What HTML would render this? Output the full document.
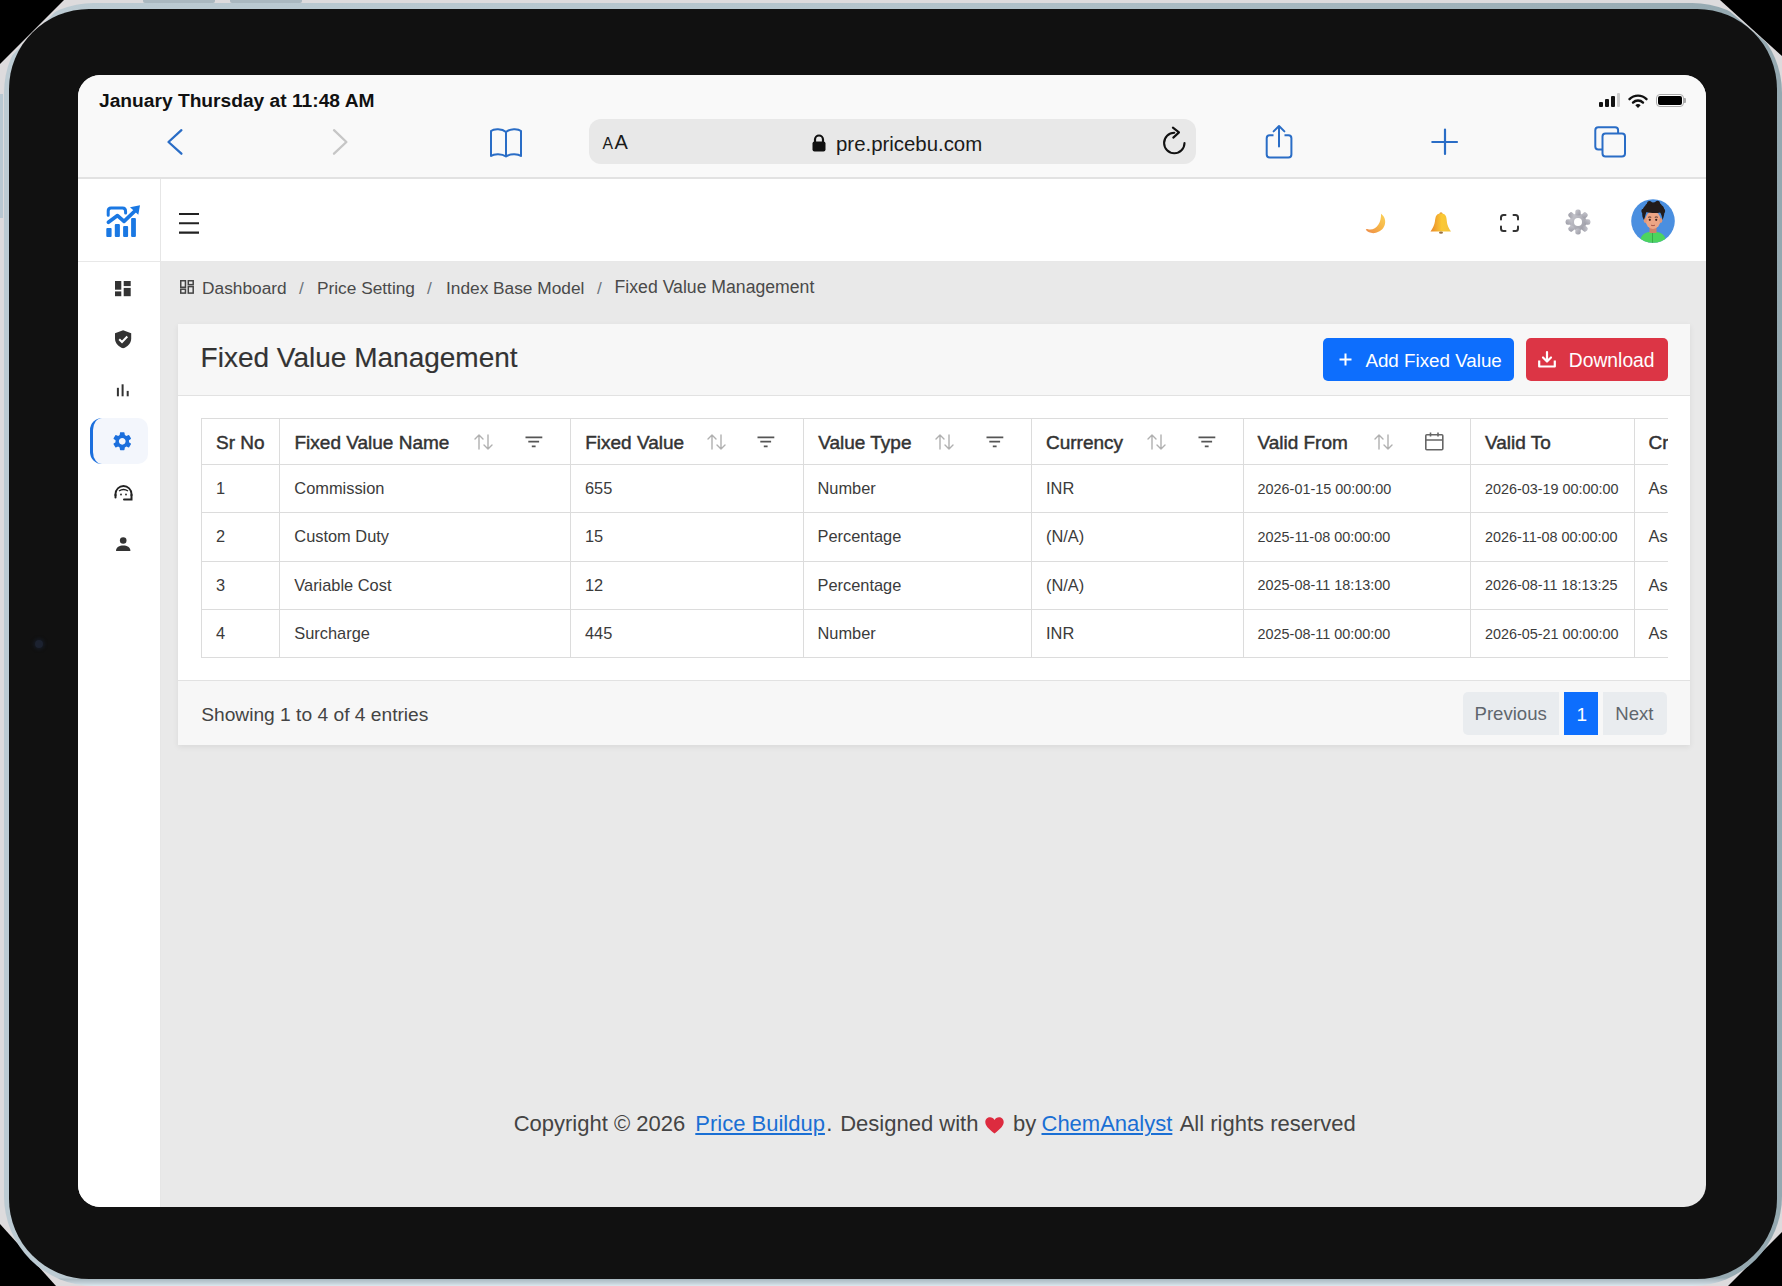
<!DOCTYPE html>
<html><head><meta charset="utf-8">
<style>
*{box-sizing:border-box;margin:0;padding:0}
html,body{width:1782px;height:1286px;overflow:hidden;background:#000;font-family:"Liberation Sans",sans-serif}
.a{position:absolute}
.t{position:absolute;line-height:1;white-space:nowrap}
#outer{position:absolute;left:0;top:0;width:1782px;height:1286px;background:#dddbdd;clip-path:polygon(64px 0,1720px 0,1782px 56px,1782px 1232px,1728px 1286px,56px 1286px,0 1224px,0 64px)}
#ring{position:absolute;left:3.5px;top:3px;width:1778.5px;height:1283px;background:linear-gradient(0deg,#dbe8ee 0,#c3d0d8 3px,#a8b8c0 7px,rgba(168,184,192,0) 8px),linear-gradient(90deg,#bccbd3,#b4c4cc 50%,#94a8b0);border-radius:90px;clip-path:polygon(60.5px 0,1716.5px 0,1778.5px 53px,1778.5px 1283px,0 1283px,0 61px)}
#bezel{position:absolute;left:9px;top:8.5px;width:1768px;height:1270.5px;background:#111;border-radius:80px}
#screen{position:absolute;left:78px;top:75px;width:1628px;height:1132px;background:#e9e9e9;border-radius:22px;overflow:hidden}
#safari{position:absolute;left:0;top:0;width:1628px;height:104px;background:#f9f9f9;border-bottom:2px solid #e2e2e2}
#apphdr{position:absolute;left:0;top:104px;width:1628px;height:83px;background:#fff;border-bottom:1px solid #e8e8e8}
#sidebar{position:absolute;left:0;top:104px;width:83px;height:1028px;background:#fff;border-right:1px solid #e6e6e6}
svg{position:absolute;overflow:visible}
</style></head><body>
<div id="outer"></div>
<div id="ring"></div>
<div id="bezel"></div>
<div class="a" style="left:143px;top:0;width:72px;height:3px;background:#aab8c0;border-radius:0 0 2px 2px"></div>
<div class="a" style="left:230px;top:0;width:72px;height:3px;background:#aab8c0;border-radius:0 0 2px 2px"></div>
<div class="a" style="left:0;top:94px;width:3px;height:124px;background:#b8c8d2"></div>
<div class="a" style="left:35px;top:640px;width:8px;height:8px;border-radius:50%;background:#1c2230;box-shadow:0 0 3px 2px #141820"></div>
<div id="screen">
  <!-- SAFARI -->
  <div id="safari">
    <div class="t" style="left:21px;top:15.6px;font-size:19.2px;font-weight:bold;color:#111">January Thursday at 11:48 AM</div>
    <!-- status icons -->
    <div class="a" style="left:1521px;top:27px;width:4px;height:5px;background:#111;border-radius:1px"></div>
    <div class="a" style="left:1527px;top:24px;width:4px;height:8px;background:#111;border-radius:1px"></div>
    <div class="a" style="left:1533px;top:21px;width:4px;height:11px;background:#111;border-radius:1px"></div>
    <div class="a" style="left:1539px;top:18px;width:3px;height:14px;background:#ccc;border-radius:1px"></div>
    <svg style="left:1550px;top:19px" width="20" height="14" viewBox="0 0 20 14"><path d="M1.5 5.2 A12 12 0 0 1 18.5 5.2" fill="none" stroke="#111" stroke-width="2.4" stroke-linecap="round"/><path d="M5 8.6 A7 7 0 0 1 15 8.6" fill="none" stroke="#111" stroke-width="2.4" stroke-linecap="round"/><path d="M7.3 11.3 L10 14 L12.7 11.3 A3.8 3.8 0 0 0 7.3 11.3Z" fill="#111"/></svg>
    <div class="a" style="left:1578px;top:19px;width:28px;height:13px;border:1.5px solid #aaa;border-radius:4px;background:#fff"></div>
    <div class="a" style="left:1580px;top:21px;width:24px;height:9px;background:#000;border-radius:2px"></div>
    <div class="a" style="left:1606px;top:23px;width:2px;height:5px;background:#aaa;border-radius:0 1px 1px 0"></div>
    <!-- back / forward -->
    <svg style="left:88px;top:53px" width="18" height="28" viewBox="0 0 18 28"><path d="M15.4 2.2 L2.5 14 L15.4 25.7" fill="none" stroke="#2a6dc6" stroke-width="2.3" stroke-linecap="round" stroke-linejoin="round"/></svg>
    <svg style="left:254px;top:53px" width="18" height="28" viewBox="0 0 18 28"><path d="M2 2.2 L14.4 14 L2 25.7" fill="none" stroke="#c6c6c6" stroke-width="2.3" stroke-linecap="round" stroke-linejoin="round"/></svg>
    <!-- book -->
    <svg style="left:410px;top:52px" width="36" height="32" viewBox="0 0 36 32"><path d="M18 5 C14 1.5 6 1.5 3 4 L3 29 C6 26.5 14 26.5 18 29.5 C22 26.5 30 26.5 33 29 L33 4 C30 1.5 22 1.5 18 5 Z M18 5 L18 29.5" fill="none" stroke="#2a6dc6" stroke-width="2" stroke-linejoin="round"/></svg>
    <!-- url field -->
    <div class="a" style="left:511px;top:44px;width:607px;height:45px;background:#e8e8e8;border-radius:12px"></div>
    <div class="t" style="left:524.6px;top:60.6px;font-size:15.8px;color:#1a1a1a">A</div>
    <div class="t" style="left:536.6px;top:57.2px;font-size:20px;color:#1a1a1a">A</div>
    <svg style="left:733px;top:59px" width="16" height="19" viewBox="0 0 16 19"><path d="M4 8 L4 5.5 A4 4 0 0 1 12 5.5 L12 8" fill="none" stroke="#111" stroke-width="2.2"/><rect x="1.5" y="7.5" width="13" height="10" rx="2" fill="#111"/></svg>
    <div class="t" style="left:758px;top:58.5px;font-size:20.4px;color:#1a1a1a">pre.pricebu.com</div>
    <svg style="left:1082px;top:49px" width="30" height="32" viewBox="0 0 30 32"><path d="M14.3 8.8 A10.2 10.2 0 1 0 24.5 19" fill="none" stroke="#111" stroke-width="2.1" stroke-linecap="round"/><path d="M12.9 3.6 L19 8.4 L13.3 13.6" fill="none" stroke="#111" stroke-width="2.1" stroke-linecap="round" stroke-linejoin="round"/></svg>
    <!-- share -->
    <svg style="left:1186px;top:49px" width="30" height="36" viewBox="0 0 30 36"><path d="M9.5 11.2 H5.7 Q2.7 11.2 2.7 14.2 V30.6 Q2.7 33.6 5.7 33.6 H24.4 Q27.4 33.6 27.4 30.6 V14.2 Q27.4 11.2 24.4 11.2 H20.5" fill="none" stroke="#2a6dc6" stroke-width="2"/><path d="M15 22.4 V2 M9.6 7.4 L15 2 L20.4 7.4" fill="none" stroke="#2a6dc6" stroke-width="2" stroke-linecap="round" stroke-linejoin="round"/></svg>
    <!-- plus -->
    <svg style="left:1352px;top:53px" width="29" height="28" viewBox="0 0 29 28"><path d="M15 1.6 V25.9 M2.3 14 H27" fill="none" stroke="#2a6dc6" stroke-width="2.2" stroke-linecap="round"/></svg>
    <!-- tabs -->
    <svg style="left:1515px;top:50px" width="34" height="34" viewBox="0 0 34 34"><path d="M9.5 24.6 H5.3 Q2.3 24.6 2.3 21.6 V5.3 Q2.3 2.3 5.3 2.3 H22.1 Q25.1 2.3 25.1 5.3 V8.5" fill="none" stroke="#2a6dc6" stroke-width="2"/><rect x="9.5" y="8.5" width="22.5" height="22.9" rx="3" fill="none" stroke="#2a6dc6" stroke-width="2"/></svg>
  </div>

  <!-- APP HEADER -->
  <div id="apphdr">
    <svg style="left:101px;top:33.6px" width="21" height="21" viewBox="0 0 21 21"><path d="M0 1 H20 M0 10.3 H20 M0 19.6 H20" stroke="#222" stroke-width="2.1" fill="none"/></svg>
    <!-- moon -->
    <svg style="left:1287px;top:34px" width="24" height="22" viewBox="0 0 24 22"><defs><linearGradient id="mg" x1="0" y1="1" x2="1" y2="0"><stop offset="0" stop-color="#ee8a4a"/><stop offset="0.5" stop-color="#f6b347"/><stop offset="1" stop-color="#fbd35a"/></linearGradient></defs><path d="M16 0.8 C22.5 5 22 17 11 19.8 C7 20.8 3 19.5 0.8 16.8 C1 16 1.8 15.8 3 16.3 C11 18 16.5 10 16 0.8 Z" fill="url(#mg)"/></svg>
    <!-- bell -->
    <svg style="left:1352px;top:32.5px" width="22" height="23" viewBox="0 0 22 23"><defs><linearGradient id="bg" x1="0" y1="0" x2="1" y2="0"><stop offset="0" stop-color="#e8862a"/><stop offset="0.55" stop-color="#fbc934"/><stop offset="1" stop-color="#f3c13e"/></linearGradient></defs><circle cx="11" cy="1.8" r="1.6" fill="#e39a3a"/><path d="M11 1.5 C6 1.5 5.5 5 5 9 C4.5 13 2.5 16.5 0.5 19.5 L21 19.5 C19 16.5 17 13 16.8 9 C16.5 5 16 1.5 11 1.5 Z" fill="url(#bg)"/><ellipse cx="11" cy="20.6" rx="2" ry="1.2" fill="#9a7040"/></svg>
    <!-- fullscreen -->
    <svg style="left:1422px;top:35px" width="19" height="18" viewBox="0 0 19 18"><path d="M1 5.5 V3.5 Q1 1 3.5 1 H5.5 M13.5 1 H15.5 Q18 1 18 3.5 V5.5 M18 12.5 V14.5 Q18 17 15.5 17 H13.5 M5.5 17 H3.5 Q1 17 1 14.5 V12.5" fill="none" stroke="#333" stroke-width="2" stroke-linecap="round"/></svg>
    <!-- gear -->
    <svg style="left:1487px;top:30px" width="26" height="26" viewBox="0 0 26 26"><defs><linearGradient id="gg" x1="0" y1="0" x2="1" y2="1"><stop offset="0" stop-color="#c9c9d0"/><stop offset="1" stop-color="#9a9aa4"/></linearGradient></defs><g fill="url(#gg)"><circle cx="13" cy="13" r="8.5"/><g id="th"><rect x="10.3" y="0.6" width="5.4" height="6" rx="2.2"/><rect x="10.3" y="19.4" width="5.4" height="6" rx="2.2"/></g><use href="#th" transform="rotate(45 13 13)"/><use href="#th" transform="rotate(90 13 13)"/><use href="#th" transform="rotate(135 13 13)"/></g><circle cx="13" cy="13" r="4" fill="#fff"/></svg>
    <!-- avatar -->
    <svg style="left:1553.4px;top:20.3px" width="44" height="44" viewBox="0 0 44 44"><defs><clipPath id="ac"><circle cx="22" cy="22" r="21.8"/></clipPath></defs><circle cx="22" cy="22" r="21.8" fill="#4a8fe0"/><g clip-path="url(#ac)"><path d="M9 44 C9 36 14 32.5 22 32.5 C30 32.5 35 36 35 44 Z" fill="#4cd45e"/><path d="M21.5 33 V44" stroke="#3aa84a" stroke-width="1"/><rect x="18.5" y="26" width="7" height="8" fill="#d0826a"/><ellipse cx="22" cy="21" rx="7.6" ry="9" fill="#eca585"/><ellipse cx="14.3" cy="21.5" rx="1.6" ry="2.4" fill="#e09878"/><ellipse cx="29.7" cy="21.5" rx="1.6" ry="2.4" fill="#e09878"/><path d="M13 21 C10 17 11 9 14 7 C15 4 19 2.5 22 3.5 C25 2 29.5 3.5 31 6.5 C34 8 34.5 14 31.5 21 C31 17 30 14.5 29 13.5 C26 14.5 18 14 15.5 13 C14.5 15 14 18 13 21 Z" fill="#221c1c"/><circle cx="12.5" cy="12" r="2.2" fill="#221c1c"/><circle cx="32" cy="12" r="2.2" fill="#221c1c"/><circle cx="18.5" cy="4.5" r="2.5" fill="#221c1c"/><circle cx="26.5" cy="4.2" r="2.5" fill="#221c1c"/><path d="M17.2 18.3 Q18.7 17.6 20.2 18.3 M23.8 18.3 Q25.3 17.6 26.8 18.3" stroke="#3a2420" stroke-width="0.9" fill="none"/><circle cx="18.8" cy="20.8" r="1.1" fill="#3a2420"/><circle cx="25.2" cy="20.8" r="1.1" fill="#3a2420"/><path d="M20 26.2 Q22 27.2 24 26.2" stroke="#a8584a" stroke-width="1" fill="none"/></g></svg>
  </div>
  <!-- SIDEBAR -->
  <div id="sidebar">
    <svg style="left:27px;top:23.8px" width="37" height="35" viewBox="0 0 37 35"><g fill="#1a78e3"><rect x="1.3" y="25" width="5.3" height="9" rx="1"/><rect x="9.8" y="21" width="5.1" height="13" rx="1"/><rect x="18.1" y="23" width="5" height="11" rx="1"/><rect x="26.1" y="15" width="4.8" height="19" rx="1"/><path d="M25 4.3 L35 2.2 L33.3 11.8 Z"/></g><path d="M3.4 19.2 L12.5 12.6 L19 18.4 L32 6" fill="none" stroke="#1a78e3" stroke-width="3.7" stroke-linecap="round" stroke-linejoin="round"/><path d="M3.2 12.2 V8 Q3.2 5 6 5 H17.5 Q20.6 5 20.6 8.5 V10" fill="none" stroke="#1a78e3" stroke-width="3" stroke-linecap="round"/></svg>
    <div class="a" style="left:0;top:82px;width:82px;height:1px;background:#e8e8e8"></div>
    <!-- dashboard icon -->
    <svg style="left:36.8px;top:101.6px" width="16" height="16" viewBox="0 0 16 16"><g fill="#333"><rect x="0" y="0" width="6.3" height="8.7"/><rect x="0" y="10.4" width="6.3" height="4.8"/><rect x="8.7" y="0" width="7" height="5.1"/><rect x="8.7" y="6.9" width="7" height="8.3"/></g></svg>
    <!-- shield -->
    <svg style="left:36.8px;top:151.2px" width="17" height="19" viewBox="0 0 17 19"><path d="M8.1 0.2 L16.2 3.2 V8.5 C16.2 13 12.8 16.8 8.1 18.3 C3.4 16.8 0 13 0 8.5 V3.2 Z" fill="#333"/><path d="M4.2 9.2 L7 12 L12.3 6.5" fill="none" stroke="#fff" stroke-width="2"/></svg>
    <!-- chart -->
    <svg style="left:38px;top:205px" width="14" height="14" viewBox="0 0 14 14"><g fill="#333"><rect x="0.9" y="3.8" width="2" height="8.5"/><rect x="5.6" y="0.3" width="2" height="12"/><rect x="10.7" y="6.9" width="2" height="5.4"/></g></svg>
    <!-- active -->
    <div class="a" style="left:11.7px;top:239.2px;width:58.3px;height:46px;background:#f3f6fc;border-radius:12px 10px 10px 12px;border-left:3.4px solid #1b6fdd"></div>
    <svg style="left:33.1px;top:250.7px" width="22.5" height="22.5" viewBox="0 0 24 24"><path fill="#1b6fdd" d="M19.14 12.94c.04-.3.06-.61.06-.94 0-.32-.02-.64-.07-.94l2.03-1.58a.49.49 0 0 0 .12-.61l-1.92-3.32a.49.49 0 0 0-.59-.22l-2.39.96c-.5-.38-1.03-.7-1.62-.94l-.36-2.54a.48.48 0 0 0-.48-.41h-3.84c-.24 0-.43.17-.47.41l-.36 2.54c-.59.24-1.13.57-1.62.94l-2.39-.96a.48.48 0 0 0-.59.22L2.74 8.87c-.12.21-.08.47.12.61l2.03 1.58c-.05.3-.09.63-.09.94s.02.64.07.94l-2.03 1.58a.49.49 0 0 0-.12.61l1.92 3.32c.12.22.37.29.59.22l2.39-.96c.5.38 1.03.7 1.62.94l.36 2.54c.05.24.24.41.48.41h3.84c.24 0 .44-.17.47-.41l.36-2.54c.59-.24 1.13-.56 1.62-.94l2.39.96c.22.08.47 0 .59-.22l1.92-3.32c.12-.22.07-.47-.12-.61l-2.01-1.58zM12 15.6c-1.98 0-3.6-1.62-3.6-3.6s1.62-3.6 3.6-3.6 3.6 1.62 3.6 3.6-1.62 3.6-3.6 3.6z"/></svg>
    <!-- headset -->
    <svg style="left:35.6px;top:305.7px" width="19" height="16" viewBox="0 0 19 16"><path d="M1.5 11 V9 A8 8 0 0 1 17.5 9 V11" fill="none" stroke="#222" stroke-width="1.8"/><path d="M5 6 Q9.5 3 14 6" fill="none" stroke="#222" stroke-width="1.5"/><circle cx="7" cy="9.5" r="0.9" fill="#222"/><circle cx="12" cy="9.5" r="0.9" fill="#222"/><path d="M1.5 9.5 V12.5 M17.5 9.5 V14.5 H10" fill="none" stroke="#222" stroke-width="2" stroke-linecap="round"/></svg>
    <!-- person -->
    <svg style="left:37.6px;top:357.6px" width="15" height="15" viewBox="0 0 15 15"><circle cx="7.2" cy="3.5" r="3.3" fill="#333"/><path d="M0 14 C0 10 3.5 8.5 7.2 8.5 C11 8.5 14.4 10 14.4 14 Z" fill="#333"/></svg>
  </div>
  <!-- BREADCRUMB -->
  <svg style="left:101.7px;top:205.0px" width="14" height="14" viewBox="0 0 14 14"><g fill="none" stroke="#444" stroke-width="1.5"><rect x="0.75" y="0.75" width="4.7" height="6.5"/><rect x="0.75" y="9.2" width="4.7" height="3.9"/><rect x="8.3" y="0.75" width="4.9" height="3.9"/><rect x="8.3" y="6.6" width="4.9" height="6.5"/></g></svg>
  <div class="t" style="left:124.1px;top:204.6px;font-size:17.3px;color:#4a4a4a">Dashboard</div>
  <div class="t" style="left:221.0px;top:204.6px;font-size:17.3px;color:#6c757d">/</div>
  <div class="t" style="left:239.0px;top:204.6px;font-size:17.3px;color:#4a4a4a">Price Setting</div>
  <div class="t" style="left:349.0px;top:204.6px;font-size:17.3px;color:#6c757d">/</div>
  <div class="t" style="left:368.0px;top:204.6px;font-size:17.3px;color:#4a4a4a">Index Base Model</div>
  <div class="t" style="left:519.0px;top:204.6px;font-size:17.3px;color:#6c757d">/</div>
  <div class="t" style="left:536.6px;top:204.4px;font-size:17.65px;color:#4a4a4a">Fixed Value Management</div>
  <!-- CARD -->
  <div class="a" style="left:100.0px;top:248.7px;width:1511.5px;height:421.1px;background:#fff;box-shadow:0 2px 6px rgba(0,0,0,0.07)"></div>
  <div class="a" style="left:100.0px;top:248.7px;width:1511.5px;height:72.0px;background:#f7f7f7;border-bottom:1px solid #e2e2e2"></div>
  <div class="a" style="left:100.0px;top:605.0px;width:1511.5px;height:64.8px;background:#f7f7f7;border-top:1px solid #e2e2e2"></div>
  <div class="t" style="left:122.6px;top:268.6px;font-size:28px;color:#333;-webkit-text-stroke:0.15px #333">Fixed Value Management</div>
  <div class="a" style="left:1244.6px;top:263.0px;width:191.6px;height:42.6px;background:#0d6efd;border-radius:5px"></div>
  <div class="a" style="left:1447.6px;top:263.0px;width:142.0px;height:42.6px;background:#dc3545;border-radius:5px"></div>
  <svg style="left:1260.7px;top:277.5px" width="13" height="13" viewBox="0 0 13 13"><path d="M6.5 0.5 V12.5 M0.5 6.5 H12.5" stroke="#fff" stroke-width="2" fill="none"/></svg>
  <div class="t" style="left:1287.4px;top:276.6px;font-size:18.8px;color:#fff">Add Fixed Value</div>
  <svg style="left:1460.3px;top:275.5px" width="18" height="17" viewBox="0 0 18 17"><path d="M9 1 V10 M5 6.5 L9 10.5 L13 6.5" stroke="#fff" stroke-width="2.2" fill="none" stroke-linecap="round" stroke-linejoin="round"/><path d="M1.2 9.5 V15.5 H16.8 V9.5" stroke="#fff" stroke-width="2.2" fill="none" stroke-linejoin="round"/></svg>
  <div class="t" style="left:1490.8px;top:276.2px;font-size:19.3px;color:#fff">Download</div>
  <!-- TABLE -->
  <div class="a" style="left:123.3px;top:343.3px;width:1466.3px;height:240px;overflow:hidden">
  <div class="a" style="left:0.0px;top:0;width:1px;height:239.9px;background:#dcdcdc"></div>
  <div class="a" style="left:78.2px;top:0;width:1px;height:239.9px;background:#dcdcdc"></div>
  <div class="a" style="left:368.7px;top:0;width:1px;height:239.9px;background:#dcdcdc"></div>
  <div class="a" style="left:601.3px;top:0;width:1px;height:239.9px;background:#dcdcdc"></div>
  <div class="a" style="left:830.1px;top:0;width:1px;height:239.9px;background:#dcdcdc"></div>
  <div class="a" style="left:1041.9px;top:0;width:1px;height:239.9px;background:#dcdcdc"></div>
  <div class="a" style="left:1269.0px;top:0;width:1px;height:239.9px;background:#dcdcdc"></div>
  <div class="a" style="left:1432.3px;top:0;width:1px;height:239.9px;background:#dcdcdc"></div>
  <div class="a" style="left:0;top:0.0px;width:1500px;height:1px;background:#dcdcdc"></div>
  <div class="a" style="left:0;top:45.9px;width:1500px;height:1px;background:#dcdcdc"></div>
  <div class="a" style="left:0;top:94.2px;width:1500px;height:1px;background:#dcdcdc"></div>
  <div class="a" style="left:0;top:142.7px;width:1500px;height:1px;background:#dcdcdc"></div>
  <div class="a" style="left:0;top:191.1px;width:1500px;height:1px;background:#dcdcdc"></div>
  <div class="a" style="left:0;top:238.9px;width:1500px;height:1px;background:#dcdcdc"></div>
  <div class="t" style="left:14.7px;top:14.9px;font-size:19px;color:#333;-webkit-text-stroke:0.45px #333">Sr No</div>
  <div class="t" style="left:93.2px;top:14.9px;font-size:19px;color:#333;-webkit-text-stroke:0.45px #333">Fixed Value Name</div>
  <div class="t" style="left:383.9px;top:14.9px;font-size:19px;color:#333;-webkit-text-stroke:0.45px #333">Fixed Value</div>
  <div class="t" style="left:616.9px;top:14.9px;font-size:19px;color:#333;-webkit-text-stroke:0.45px #333">Value Type</div>
  <div class="t" style="left:844.7px;top:14.9px;font-size:19px;color:#333;-webkit-text-stroke:0.45px #333">Currency</div>
  <div class="t" style="left:1056.1px;top:14.9px;font-size:19px;color:#333;-webkit-text-stroke:0.45px #333">Valid From</div>
  <div class="t" style="left:1283.6px;top:14.9px;font-size:19px;color:#333;-webkit-text-stroke:0.45px #333">Valid To</div>
  <div class="t" style="left:1447.3px;top:14.9px;font-size:19px;color:#333;-webkit-text-stroke:0.45px #333">Cr</div>
  <svg style="left:272.6px;top:15.3px" width="19" height="16" viewBox="0 0 19 16"><path d="M5 15 V1 M1 5 L5 1 L9 5 M14 1 V15 M10 11 L14 15 L18 11" fill="none" stroke="#b0b0b0" stroke-width="1.4" stroke-linecap="round" stroke-linejoin="round"/></svg>
  <svg style="left:505.5px;top:15.3px" width="19" height="16" viewBox="0 0 19 16"><path d="M5 15 V1 M1 5 L5 1 L9 5 M14 1 V15 M10 11 L14 15 L18 11" fill="none" stroke="#b0b0b0" stroke-width="1.4" stroke-linecap="round" stroke-linejoin="round"/></svg>
  <svg style="left:734.2px;top:15.3px" width="19" height="16" viewBox="0 0 19 16"><path d="M5 15 V1 M1 5 L5 1 L9 5 M14 1 V15 M10 11 L14 15 L18 11" fill="none" stroke="#b0b0b0" stroke-width="1.4" stroke-linecap="round" stroke-linejoin="round"/></svg>
  <svg style="left:946.1px;top:15.3px" width="19" height="16" viewBox="0 0 19 16"><path d="M5 15 V1 M1 5 L5 1 L9 5 M14 1 V15 M10 11 L14 15 L18 11" fill="none" stroke="#b0b0b0" stroke-width="1.4" stroke-linecap="round" stroke-linejoin="round"/></svg>
  <svg style="left:1173.2px;top:15.3px" width="19" height="16" viewBox="0 0 19 16"><path d="M5 15 V1 M1 5 L5 1 L9 5 M14 1 V15 M10 11 L14 15 L18 11" fill="none" stroke="#b0b0b0" stroke-width="1.4" stroke-linecap="round" stroke-linejoin="round"/></svg>
  <svg style="left:323.8px;top:17.7px" width="18" height="12" viewBox="0 0 18 12"><path d="M0.5 1.3 H17.3 M3.3 5.6 H14.1 M6.8 10.4 H10.6" fill="none" stroke="#555" stroke-width="1.7"/></svg>
  <svg style="left:556.2px;top:17.7px" width="18" height="12" viewBox="0 0 18 12"><path d="M0.5 1.3 H17.3 M3.3 5.6 H14.1 M6.8 10.4 H10.6" fill="none" stroke="#555" stroke-width="1.7"/></svg>
  <svg style="left:785.2px;top:17.7px" width="18" height="12" viewBox="0 0 18 12"><path d="M0.5 1.3 H17.3 M3.3 5.6 H14.1 M6.8 10.4 H10.6" fill="none" stroke="#555" stroke-width="1.7"/></svg>
  <svg style="left:996.7px;top:17.7px" width="18" height="12" viewBox="0 0 18 12"><path d="M0.5 1.3 H17.3 M3.3 5.6 H14.1 M6.8 10.4 H10.6" fill="none" stroke="#555" stroke-width="1.7"/></svg>
  <svg style="left:1223.5px;top:13.7px" width="19" height="19" viewBox="0 0 19 19"><rect x="0.8" y="2.8" width="17" height="15" rx="1" fill="none" stroke="#666" stroke-width="1.6"/><path d="M0.8 8 H17.8 M5.5 0.5 V4.5 M13 0.5 V4.5" fill="none" stroke="#666" stroke-width="1.6"/></svg>
  <div class="t" style="left:14.7px;top:61.8px;font-size:16.4px;color:#3b3b3b">1</div>
  <div class="t" style="left:93.0px;top:61.8px;font-size:16.4px;color:#3b3b3b">Commission</div>
  <div class="t" style="left:383.7px;top:61.8px;font-size:16.4px;color:#3b3b3b">655</div>
  <div class="t" style="left:616.2px;top:61.8px;font-size:16.4px;color:#3b3b3b">Number</div>
  <div class="t" style="left:844.7px;top:61.8px;font-size:16.4px;color:#3b3b3b">INR</div>
  <div class="t" style="left:1056.3px;top:63.5px;font-size:14.4px;color:#3b3b3b">2026-01-15 00:00:00</div>
  <div class="t" style="left:1283.7px;top:63.5px;font-size:14.4px;color:#3b3b3b">2026-03-19 00:00:00</div>
  <div class="t" style="left:1447.3px;top:61.8px;font-size:16.4px;color:#3b3b3b">As</div>
  <div class="t" style="left:14.7px;top:110.1px;font-size:16.4px;color:#3b3b3b">2</div>
  <div class="t" style="left:93.0px;top:110.1px;font-size:16.4px;color:#3b3b3b">Custom Duty</div>
  <div class="t" style="left:383.7px;top:110.1px;font-size:16.4px;color:#3b3b3b">15</div>
  <div class="t" style="left:616.2px;top:110.1px;font-size:16.4px;color:#3b3b3b">Percentage</div>
  <div class="t" style="left:844.7px;top:110.1px;font-size:16.4px;color:#3b3b3b">(N/A)</div>
  <div class="t" style="left:1056.3px;top:111.8px;font-size:14.4px;color:#3b3b3b">2025-11-08 00:00:00</div>
  <div class="t" style="left:1283.7px;top:111.8px;font-size:14.4px;color:#3b3b3b">2026-11-08 00:00:00</div>
  <div class="t" style="left:1447.3px;top:110.1px;font-size:16.4px;color:#3b3b3b">As</div>
  <div class="t" style="left:14.7px;top:158.4px;font-size:16.4px;color:#3b3b3b">3</div>
  <div class="t" style="left:93.0px;top:158.4px;font-size:16.4px;color:#3b3b3b">Variable Cost</div>
  <div class="t" style="left:383.7px;top:158.4px;font-size:16.4px;color:#3b3b3b">12</div>
  <div class="t" style="left:616.2px;top:158.4px;font-size:16.4px;color:#3b3b3b">Percentage</div>
  <div class="t" style="left:844.7px;top:158.4px;font-size:16.4px;color:#3b3b3b">(N/A)</div>
  <div class="t" style="left:1056.3px;top:160.1px;font-size:14.4px;color:#3b3b3b">2025-08-11 18:13:00</div>
  <div class="t" style="left:1283.7px;top:160.1px;font-size:14.4px;color:#3b3b3b">2026-08-11 18:13:25</div>
  <div class="t" style="left:1447.3px;top:158.4px;font-size:16.4px;color:#3b3b3b">As</div>
  <div class="t" style="left:14.7px;top:206.7px;font-size:16.4px;color:#3b3b3b">4</div>
  <div class="t" style="left:93.0px;top:206.7px;font-size:16.4px;color:#3b3b3b">Surcharge</div>
  <div class="t" style="left:383.7px;top:206.7px;font-size:16.4px;color:#3b3b3b">445</div>
  <div class="t" style="left:616.2px;top:206.7px;font-size:16.4px;color:#3b3b3b">Number</div>
  <div class="t" style="left:844.7px;top:206.7px;font-size:16.4px;color:#3b3b3b">INR</div>
  <div class="t" style="left:1056.3px;top:208.4px;font-size:14.4px;color:#3b3b3b">2025-08-11 00:00:00</div>
  <div class="t" style="left:1283.7px;top:208.4px;font-size:14.4px;color:#3b3b3b">2026-05-21 00:00:00</div>
  <div class="t" style="left:1447.3px;top:206.7px;font-size:16.4px;color:#3b3b3b">As</div>
  </div>
  <div class="t" style="left:123.2px;top:629.9px;font-size:19.2px;color:#444">Showing 1 to 4 of 4 entries</div>
  <div class="a" style="left:1385.0px;top:617.2px;width:95.7px;height:42.6px;background:#e9ecef;border-radius:5px 0 0 5px"></div>
  <div class="a" style="left:1485.5px;top:617.2px;width:34.8px;height:42.6px;background:#0d6efd"></div>
  <div class="a" style="left:1524.7px;top:617.2px;width:64.3px;height:42.6px;background:#e9ecef;border-radius:0 5px 5px 0"></div>
  <div class="t" style="left:1396.5px;top:630.2px;font-size:18.6px;color:#5f666d">Previous</div>
  <div class="t" style="left:1498.5px;top:629.9px;font-size:19px;color:#fff">1</div>
  <div class="t" style="left:1537.3px;top:630.2px;font-size:18.6px;color:#5f666d">Next</div>
  <div class="t" style="left:435.7px;top:1038.4px;font-size:22px;color:#444">Copyright © 2026</div>
  <div class="t" style="left:617.3px;top:1038.4px;font-size:22px;color:#1a6fd4;text-decoration:underline;text-underline-offset:2px">Price Buildup</div>
  <div class="t" style="left:748.2px;top:1038.4px;font-size:22px;color:#444">.</div>
  <div class="t" style="left:762.2px;top:1038.4px;font-size:22px;color:#444">Designed with</div>
  <svg style="left:907px;top:1041.5px" width="19" height="17" viewBox="0 0 19 17"><path d="M9.5 16.5 C3 11.5 0.3 8.5 0.3 5 C0.3 2.2 2.5 0.3 5 0.3 C7 0.3 8.5 1.3 9.5 3 C10.5 1.3 12 0.3 14 0.3 C16.5 0.3 18.7 2.2 18.7 5 C18.7 8.5 16 11.5 9.5 16.5 Z" fill="#dd2b3f"/></svg>
  <div class="t" style="left:934.9px;top:1038.4px;font-size:22px;color:#444">by</div>
  <div class="t" style="left:963.5px;top:1038.4px;font-size:22px;color:#1a6fd4;text-decoration:underline;text-underline-offset:2px">ChemAnalyst</div>
  <div class="t" style="left:1101.7px;top:1038.4px;font-size:22px;color:#444">All rights reserved</div>
</div>
</body></html>
